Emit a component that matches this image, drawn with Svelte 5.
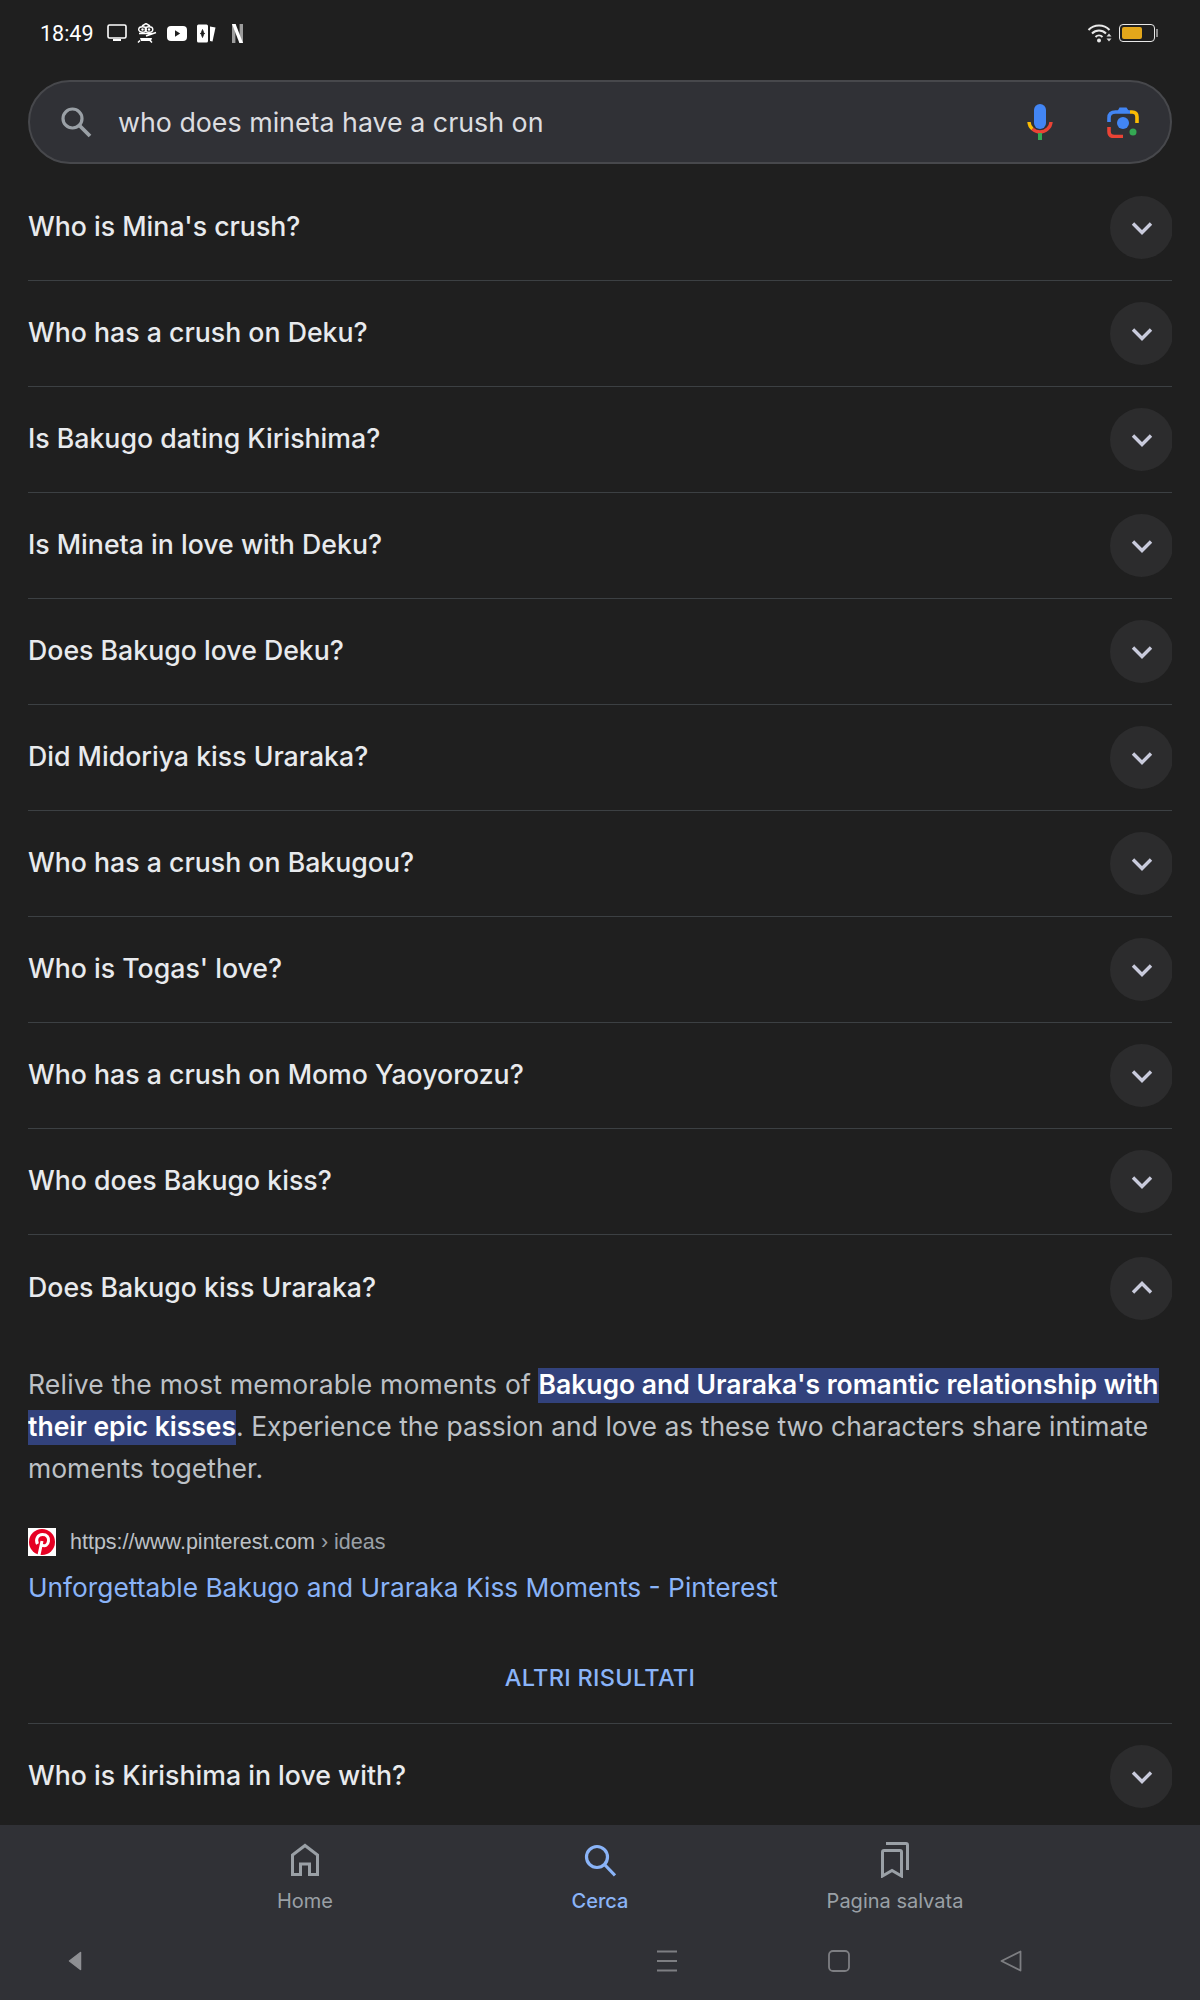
<script lang="ts">
	const before = [
		'Who is Mina\'s crush?',
		'Who has a crush on Deku?',
		'Is Bakugo dating Kirishima?',
		'Is Mineta in love with Deku?',
		'Does Bakugo love Deku?',
		'Did Midoriya kiss Uraraka?',
		'Who has a crush on Bakugou?',
		'Who is Togas\' love?',
		'Who has a crush on Momo Yaoyorozu?',
		'Who does Bakugo kiss?'
	];
</script>

{#snippet chevron(up = false)}
	<span class="toggle">
		<svg width="24" height="16" viewBox="0 0 24 16" class:up>
			<path d="M3 3.500 12 12.500 21 3.500" fill="none" stroke="#c9cbdc" stroke-width="3.400" />
		</svg>
	</span>
{/snippet}

<div class="screen">
	<div class="status">
		<span class="time">18:49</span>
		<div class="notifs">
			<svg width="20" height="18" viewBox="0 0 20 18">
				<rect x="1" y="1" width="18" height="13" rx="1.500" fill="none" stroke="#fff" stroke-width="1.600" />
				<rect x="6" y="15" width="8" height="2" fill="#fff" />
			</svg>
			<svg width="20" height="20" viewBox="0 0 20 20">
				<ellipse cx="5.500" cy="6.500" rx="3.800" ry="2.700" fill="none" stroke="#fff" stroke-width="1.400" />
				<ellipse cx="12" cy="6.500" rx="3.800" ry="2.700" fill="none" stroke="#fff" stroke-width="1.400" />
				<circle cx="5.500" cy="6.500" r="1.200" fill="#fff" />
				<circle cx="12" cy="6.500" r="1.200" fill="#fff" />
				<path d="M5 3 9 .6l4 2.400M2 10.500h14M9 13l10-3.500" fill="none" stroke="#fff" stroke-width="1.500" />
				<path d="M3 15h12l-1 3H4Z" fill="#fff" />
				<path d="M3 17.500 1 19.500M13 17.500l2 2" stroke="#fff" stroke-width="1.500" />
			</svg>
			<svg width="20" height="15" viewBox="0 0 20 15">
				<rect width="20" height="15" rx="4" fill="#fff" />
				<path d="M8 4.200 13.200 7.500 8 10.800Z" fill="#1f1f1f" />
			</svg>
			<svg width="19" height="19" viewBox="0 0 19 19">
				<rect width="11" height="18" y="0.500" rx="1.500" fill="#fff" />
				<path d="M5.500 5.500 7 9.500 5.500 13.500 4 9.500ZM3 9.500h5" fill="#1f1f1f" stroke="#1f1f1f" stroke-width=".8" />
				<path d="M13 2.500 18.500 3.500 15.500 17.500 13 17Z" fill="#fff" />
			</svg>
			<svg class="netflix" width="11" height="19" viewBox="0 0 11 19">
				<rect width="3.400" height="19" fill="#9c9c9c" />
				<rect x="7.600" width="3.400" height="19" fill="#9c9c9c" />
				<path d="M0 0H3.600L11 19H7.400Z" fill="#fff" />
			</svg>
		</div>
		<div class="system">
			<svg width="26" height="20" viewBox="0 0 26 20">
				<path d="M1.500 7C7 1 17 1 22.500 7M5 10.500C9 6.500 15 6.500 19 10.500M8.500 14C10.500 12 13.500 12 15.500 14" fill="none" stroke="#e8e8e8" stroke-width="2" />
				<circle cx="12" cy="17.500" r="2" fill="#e8e8e8" />
				<path d="M19.500 13.500h5l-2.500-3ZM19.500 15.500h5l-2.500 3Z" fill="#d8d8d8" />
			</svg>
			<div class="battery">
				<span class="level"></span>
			</div>
		</div>
	</div>

	<div class="search">
		<svg class="glass" width="32" height="32" viewBox="0 0 32 32">
			<circle cx="12.500" cy="12.500" r="9.500" fill="none" stroke="#9aa0a6" stroke-width="3.200" />
			<path d="M19.500 19.500 30 30" stroke="#9aa0a6" stroke-width="3.800" />
		</svg>
		<span class="query">who does mineta have a crush on</span>
		<svg class="mic" width="26" height="36" viewBox="0 0 26 36">
			<rect x="7" y="0" width="12" height="25" rx="6" fill="#4285f4" />
			<path d="M2 18C2.200 21 3.200 23.200 5.500 25" fill="none" stroke="#fbbc04" stroke-width="3.400" />
			<path d="M5.500 25C10 29 16 29 20.500 25C22.800 23.200 23.800 21 24 18" fill="none" stroke="#ea4335" stroke-width="3.400" />
			<rect x="11" y="29" width="4" height="7" fill="#34a853" />
		</svg>
		<svg class="lens" width="32" height="32" viewBox="0 0 32 32">
			<path d="M2 16V12Q2 6 8.500 6H23" fill="none" stroke="#4285f4" stroke-width="3.600" />
			<path d="M10 6 12.500 1.500H19.500L22.500 6Z" fill="#4285f4" />
			<path d="M23 6H25Q30 6 30 11V17" fill="none" stroke="#fbbc04" stroke-width="3.600" />
			<path d="M2 21V25.500Q2 30.500 7.500 30.500H16" fill="none" stroke="#ea4335" stroke-width="3.600" />
			<circle cx="16" cy="17" r="6" fill="#4285f4" />
			<circle cx="26" cy="26" r="3.500" fill="#34a853" />
		</svg>
	</div>

	<div class="list">
		{#each before as question (question)}
			<div class="row">
				<span class="question">{question}</span>
				{@render chevron()}
			</div>
		{/each}

		<div class="row open">
			<span class="question">Does Bakugo kiss Uraraka?</span>
			{@render chevron(true)}
		</div>
		<div class="answer">
			<p class="snippet"><span class="lead">Relive the most memorable moments of</span>{' '}<mark>Bakugo and Uraraka's romantic relationship with their epic kisses</mark>. Experience the passion and love as these two characters share intimate moments together.</p>
			<div class="source">
				<svg width="28" height="28" viewBox="0 0 28 28">
					<rect width="28" height="28" fill="#fff" />
					<circle cx="14" cy="14" r="13" fill="#e60023" />
					<path d="M11 27 14 13M9.500 16C7 11 10 6.500 14.500 6.500C19 6.500 21 9.500 20.500 13C20 17 17 19 14 17" fill="none" stroke="#fff" stroke-width="3" />
				</svg>
				<span class="url">https://www.pinterest.com <span class="crumb">› ideas</span></span>
			</div>
			<div class="title">Unforgettable Bakugo and Uraraka Kiss Moments - Pinterest</div>
			<div class="more">ALTRI RISULTATI</div>
		</div>

		<div class="row">
			<span class="question">Who is Kirishima in love with?</span>
			{@render chevron()}
		</div>
	</div>

	<div class="bottom">
		<nav class="tabs">
			<div class="tab">
				<svg width="28" height="32" viewBox="0 0 28 32">
					<path d="M1.500 30.500V11L14 1.500 26.500 11V30.500H18.500V20H9.500V30.500Z" fill="none" stroke="#9aa0a6" stroke-width="3" />
				</svg>
				<span>Home</span>
			</div>
			<div class="tab active">
				<svg width="32" height="32" viewBox="0 0 32 32">
					<circle cx="13" cy="13" r="10.500" fill="none" stroke="#8ab4f8" stroke-width="3.200" />
					<path d="M20.500 20.500 31 31.500" stroke="#8ab4f8" stroke-width="3.200" />
				</svg>
				<span>Cerca</span>
			</div>
			<div class="tab">
				<svg width="28" height="36" viewBox="0 0 28 36">
					<path d="M1.500 34V10Q1.500 8.500 3 8.500H19Q20.500 8.500 20.500 10V34L11 28.500Z" fill="none" stroke="#9aa0a6" stroke-width="3" />
					<path d="M5 1.500H25Q26.500 1.500 26.500 3V28" fill="none" stroke="#9aa0a6" stroke-width="3" />
				</svg>
				<span>Pagina salvata</span>
			</div>
		</nav>
		<div class="keys">
			<svg class="back" width="14" height="20" viewBox="0 0 14 20">
				<path d="M12.500 1.500V18.500L1.500 10Z" fill="#8e8f93" stroke="#8e8f93" stroke-linejoin="round" stroke-width="1.500" />
			</svg>
			<div class="right-keys">
				<svg width="22" height="22" viewBox="0 0 22 22">
					<path d="M1 1.500H21M1 11H21M1 20.500H21" stroke="#7d7e82" stroke-width="1.800" />
				</svg>
				<svg width="22" height="22" viewBox="0 0 22 22">
					<rect x="1" y="1" width="20" height="20" rx="4" fill="none" stroke="#7d7e82" stroke-width="1.800" />
				</svg>
				<svg width="22" height="22" viewBox="0 0 22 22">
					<path d="M20.500 1.500V20.500L1.500 11Z" fill="none" stroke="#7d7e82" stroke-linejoin="round" stroke-width="1.800" />
				</svg>
			</div>
		</div>
	</div>
</div>

<style>
	:global(body) {
		background: #1f1f1f;
	}

	.screen {
		display: flex;
		flex-direction: column;
		height: 2000px;
		overflow: hidden;
		background: #1f1f1f;
		font-family: Inter, Roboto, sans-serif;
	}

	.status {
		display: flex;
		align-items: center;
		height: 66px;
		padding: 0 45px 0 40px;
		box-sizing: border-box;
		flex: none;
		color: #fff;
	}

	.time {
		font-family: Roboto, sans-serif;
		font-size: 21.500px;
		width: 67px;
		padding-top: 1px;
	}

	.notifs {
		display: flex;
		align-items: center;
		gap: 10px;
	}

	.netflix {
		margin-left: 6px;
	}

	.system {
		display: flex;
		align-items: center;
		gap: 6px;
		margin-left: auto;
	}

	.battery {
		position: relative;
		box-sizing: border-box;
		width: 36px;
		height: 18px;
		padding: 2px;
		border: 1px solid #e8e8e8;
		border-radius: 4px;
	}

	.battery::after {
		content: '';
		position: absolute;
		right: -4px;
		top: 4px;
		width: 2px;
		height: 8px;
		background: #8a8a8a;
	}

	.level {
		display: block;
		width: 20px;
		height: 12px;
		background: #e3a71b;
		border-radius: 2px;
	}

	.search {
		display: flex;
		align-items: center;
		flex: none;
		box-sizing: border-box;
		height: 84px;
		margin: 14px 28px 0;
		padding: 0 31px 0 30px;
		background: #303136;
		border: 2px solid #47484c;
		border-radius: 42px;
	}

	.glass {
		flex: none;
	}

	.query {
		margin-left: 26px;
		font-size: 26.800px;
		color: #dcdde0;
		flex: 1;
	}

	.mic {
		margin-right: 54px;
	}

	.list {
		flex: 1;
		min-height: 0;
		overflow: hidden;
		margin: 11px 28px 0;
	}

	.row {
		display: flex;
		align-items: center;
		justify-content: space-between;
		box-sizing: border-box;
		height: 106px;
		border-bottom: 1px solid #3c4043;
	}

	.row.open {
		border-bottom: none;
	}

	.question {
		padding-bottom: 3px;
		font-size: 26.700px;
		font-weight: 500;
		color: #e8eaed;
	}

	.toggle {
		display: flex;
		align-items: center;
		justify-content: center;
		width: 63px;
		height: 63px;
		margin-right: -1px;
		border-radius: 50%;
		background: #2c2c2d;
	}

	.up {
		transform: rotate(180deg);
	}

	.answer {
		padding-top: 22px;
		border-bottom: 1px solid #3c4043;
	}

	.snippet {
		margin: 0;
		font-size: 26.500px;
		line-height: 42px;
		color: #bdc1c6;
	}

	.lead {
		letter-spacing: 0.2px;
	}

	mark {
		padding-bottom: 3px;
		background: #32427c;
		color: #fff;
		font-weight: 600;
	}

	.source {
		display: flex;
		align-items: center;
		gap: 14px;
		margin-top: 39px;
		font-family: "Liberation Sans", sans-serif;
		font-size: 21.500px;
		color: #bdc1c6;
	}

	.crumb {
		color: #9aa0a6;
	}

	.title {
		margin-top: 11px;
		font-size: 26.300px;
		line-height: 42px;
		color: #8ab4f8;
	}

	.more {
		margin-top: 55px;
		height: 59px;
		text-align: center;
		font-size: 23.500px;
		line-height: 28px;
		font-weight: 500;
		letter-spacing: 0.3px;
		color: #8ab4f8;
	}

	.bottom {
		flex: none;
		height: 175px;
		background: #303136;
	}

	.tabs {
		display: flex;
		justify-content: center;
		padding-top: 17px;
	}

	.tab {
		display: flex;
		flex-direction: column;
		align-items: center;
		width: 295px;
		gap: 11px;
		font-size: 20px;
		color: #9aa0a6;
	}

	.tab svg {
		height: 36px;
	}

	.tab.active {
		color: #8ab4f8;
		font-weight: 500;
	}

	.keys {
		display: flex;
		align-items: center;
		justify-content: space-between;
		padding: 37px 178px 0 68px;
	}

	.right-keys {
		display: flex;
		align-items: center;
		gap: 150px;
	}
</style>
